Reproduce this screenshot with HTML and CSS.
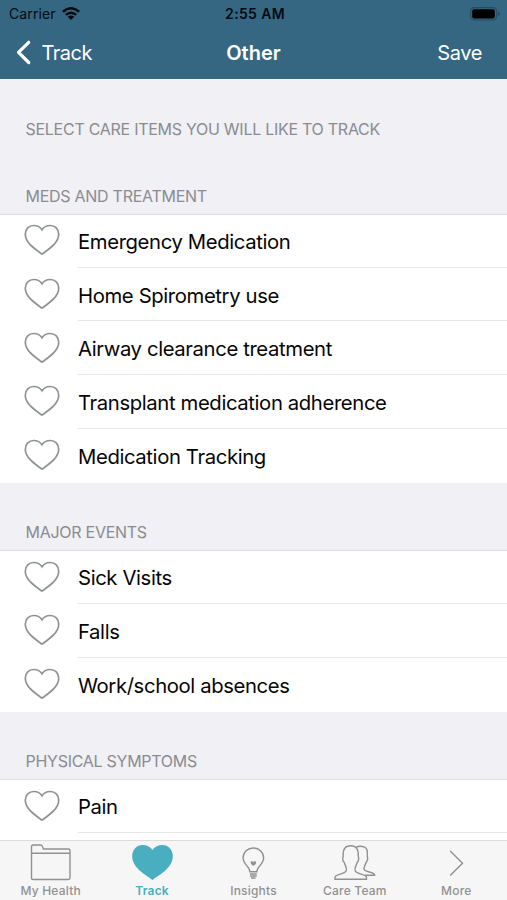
FILE: index.html
```html
<!DOCTYPE html>
<html lang="en">
<head>
<meta charset="utf-8">
<meta name="viewport" content="width=device-width, initial-scale=1">
<title>Other</title>
<link rel="stylesheet" href="styles.css">
</head>
<body>
<svg class="defs" aria-hidden="true">
  <symbol id="heart" viewBox="0 0 36 32"><path d="M18 30.2C13 26.3 1.3 19.5 1.3 10.2C1.3 5.1 5 1.5 9.6 1.5C13.2 1.5 16.4 3 18 5.8C19.6 3 22.8 1.5 26.4 1.5C31 1.5 34.7 5.1 34.7 10.2C34.7 19.5 23 26.3 18 30.2Z"/></symbol>
</svg>
<div class="app">
  <header class="top">
    <div class="status">
      <div class="carrier"><span>Carrier</span>
        <svg class="wifi" viewBox="0 0 18 13"><g fill="none" stroke="#000b12" stroke-width="2.5"><path d="M.9 4.8Q9-2.3 17.1 4.8"/><path d="M3.8 7.9Q9 3.5 14.2 7.9"/></g><path d="M5.7 9.7Q9 7.1 12.3 9.7L9 13Z" fill="#000b12"/></svg>
      </div>
      <div class="clock">2:55 AM</div>
      <svg class="battery" viewBox="0 0 31 14"><rect x=".6" y=".6" width="26" height="12.4" rx="3.6" fill="none" stroke="#244c62" stroke-width="1.1"/><rect x="2.2" y="2.2" width="22.6" height="9.2" rx="2" fill="#000"/><path d="M28 4.6Q30 5 30 6.8Q30 8.6 28 9Z" fill="#244c62"/></svg>
    </div>
    <nav class="navbar">
      <div class="back"><svg viewBox="0 0 15 25"><path d="M12.7 2.3L2.5 12.4L12.7 22.5"/></svg><span>Track</span></div>
      <div class="title">Other</div>
      <div class="save">Save</div>
    </nav>
  </header>
  <main class="content">
    <h2 class="intro">SELECT CARE ITEMS YOU WILL LIKE TO TRACK</h2>
    <h2 class="meds">MEDS AND TREATMENT</h2>
    <ul>
      <li><svg class="heart"><use href="#heart"/></svg><span>Emergency Medication</span></li>
      <li><svg class="heart"><use href="#heart"/></svg><span>Home Spirometry use</span></li>
      <li><svg class="heart"><use href="#heart"/></svg><span>Airway clearance treatment</span></li>
      <li><svg class="heart"><use href="#heart"/></svg><span>Transplant medication adherence</span></li>
      <li><svg class="heart"><use href="#heart"/></svg><span>Medication Tracking</span></li>
    </ul>
    <h2>MAJOR EVENTS</h2>
    <ul>
      <li><svg class="heart"><use href="#heart"/></svg><span>Sick Visits</span></li>
      <li><svg class="heart"><use href="#heart"/></svg><span>Falls</span></li>
      <li><svg class="heart"><use href="#heart"/></svg><span>Work/school absences</span></li>
    </ul>
    <h2>PHYSICAL SYMPTOMS</h2>
    <ul>
      <li><svg class="heart"><use href="#heart"/></svg><span>Pain</span></li>
      <li></li>
    </ul>
  </main>
  <footer class="tabs">
    <div class="tab"><svg viewBox="0 0 44 38"><path d="M2.5 34V2.7Q2.5 1 4.2 1H11.5Q13 1 13.5 2.5L14.4 5H39.3Q41 5 41 6.7V33.8Q41 35.5 39.3 35.5H4.5Q2.5 35.5 2.5 34ZM2.5 9.2H41"/></svg><span>My Health</span></div>
    <div class="tab active"><svg viewBox="0 0 44 38"><path d="M22.5 36C17.5 31.7 2.2 24.6 2.2 12.2C2.2 5.7 6.7 1 12.5 1C17.2 1 20.8 3 22.5 6C24.2 3 27.8 1 32.5 1C38.3 1 42.8 5.7 42.8 12.2C42.8 24.6 27.5 31.7 22.5 36Z"/></svg><span>Track</span></div>
    <div class="tab"><svg viewBox="0 0 44 38"><path d="M18.9 27.8C18.9 22.5 12.1 20.5 12.1 14C12.1 8 16.7 4 22.3 4S32.6 8 32.6 14C32.6 20.5 25.8 22.5 25.8 27.8ZM18.9 30H25.8M18.9 32H25.8M20 34H24.6"/><path class="solid" d="M22.4 22Q19.6 20 19.6 18.4C19.6 17 21.8 16.7 22.4 18.1C23 16.7 25.2 17 25.2 18.4Q25.2 20 22.4 22Z"/></svg><span>Insights</span></div>
    <div class="tab"><svg viewBox="0 0 44 38"><path d="M2 35.2V33.5C2 30 12 30.5 13.2 26.8C14.3 23.8 12 21.5 11.3 18.5C8.8 16.2 9.5 14.5 10.2 12C9.6 5.2 12.3 1.7 17.7 1.7S25.8 5.2 25.2 12C26 14.5 26.6 16.2 24.1 18.5C23.4 21.5 21.1 23.8 22.2 26.8C23.4 30.5 33.5 30 33.5 33.5V35.2ZM23.2 3.5C25 2.1 28 1.9 31 2.9C34.6 4.2 34.8 8 34.2 12C35.2 15 34.5 17 33 18.5C32.5 21 30.2 23 31.2 25.5C32.2 28.4 41.7 27.6 41.7 31.2H32"/></svg><span>Care Team</span></div>
    <div class="tab"><svg viewBox="0 0 44 38"><path d="M16.2 7L28.5 19.2L16.2 31.5"/></svg><span>More</span></div>
  </footer>
</div>
</body>
</html>
```
FILE: styles.css
```css
* { box-sizing: border-box; }
body { margin: 0; font-family: Inter, "Liberation Sans", sans-serif; }
.defs { display: none; }
.app { height: 900px; display: flex; flex-direction: column; background: #f0f0f5; overflow: hidden; }
.top { flex: none; height: 79px; background: #356783; }
.status { height: 27px; display: grid; grid-template-columns: 1fr auto 1fr; align-items: center; padding: 0 6px 0 9px; color: #000b12; font-size: 14px; }
.carrier { display: flex; align-items: center; gap: 6px; letter-spacing: .1px; }
.wifi { width: 18px; height: 13px; }
.clock { font-weight: 600; letter-spacing: .35px; }
.battery { width: 31px; height: 14px; justify-self: end; }
.navbar { height: 51px; display: grid; grid-template-columns: 1fr auto 1fr; align-items: center; padding: 0 25px; color: #fff; font-size: 20px; }
.back { display: flex; align-items: center; gap: 10.5px; margin-left: -9px; letter-spacing: -.5px; }
.back svg { width: 15px; height: 25px; fill: none; stroke: #fff; stroke-width: 3.2; stroke-linecap: round; stroke-linejoin: round; }
.title { font-weight: 600; }
.save { justify-self: end; letter-spacing: -.4px; }
.content { flex: 1; min-height: 0; overflow: hidden; }
h2 { margin: 0; height: 67.75px; padding: 38.5px 25.5px 0; font-size: 16px; line-height: 22px; font-weight: 400; letter-spacing: -.27px; color: #8b8b90; }
.meds { height: 67px; }
ul { margin: 0; padding: 0; list-style: none; background: #fff; box-shadow: inset 0 1px #dedee2; }
li { height: 53.75px; display: flex; padding-left: 24px; }
.heart { width: 36px; height: 32px; margin-top: 10.3px; fill: none; stroke: #909396; stroke-width: 1.7; }
li span { flex: 1; margin-left: 18px; line-height: 55.5px; font-size: 20.3px; letter-spacing: -.38px; color: #050505; border-bottom: 1px solid #e6e6e8; }
li:last-child span { border-bottom: 0; }
.tabs { flex: none; height: 60px; display: grid; grid-template-columns: repeat(5, 1fr); background: #f6f6f6; border-top: 1px solid #dcdcdc; }
.tab { display: flex; flex-direction: column; align-items: center; padding-top: 3px; color: #919191; font-size: 12px; line-height: 18px; font-weight: 500; letter-spacing: .2px; }
.tab svg { width: 44px; height: 38px; fill: none; stroke: #919191; stroke-width: 1.4; }
.tab .solid { fill: #919191; stroke: none; }
.tab.active { color: #49afc0; font-weight: 600; }
.tab.active svg { fill: #49afc0; stroke: none; }
```
